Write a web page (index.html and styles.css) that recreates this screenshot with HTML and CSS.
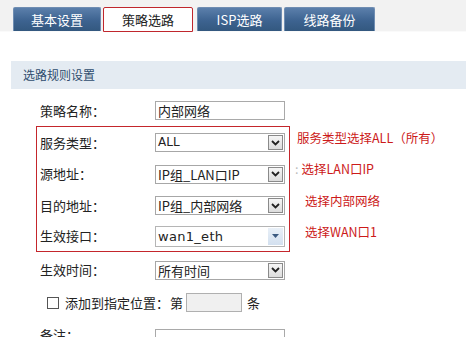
FILE: index.html
```html
<!DOCTYPE html>
<html lang="zh">
<head>
<meta charset="utf-8">
<title>策略选路</title>
<link rel="stylesheet" href="styles.css">
</head>
<body>
<div class="tabbar">
  <div class="tab">基本设置</div>
  <div class="tab active">策略选路</div>
  <div class="tab">ISP选路</div>
  <div class="tab">线路备份</div>
</div>
<div class="section">选路规则设置</div>
<div class="form">
  <div class="row first">
    <div class="label">策略名称：</div>
    <div class="input">内部网络</div>
  </div>
  <div class="boxwrap">
    <div class="redbox">
      <div class="row r1">
        <div class="label">服务类型：</div>
        <div class="select"><span class="val latin">ALL</span><span class="arrow"><svg width="9" height="6" viewBox="0 0 9 6"><path d="M1 1 L4.5 4.5 L8 1" fill="none" stroke="#222" stroke-width="1.8"/></svg></span></div>
      </div>
      <div class="row r2">
        <div class="label">源地址：</div>
        <div class="select"><span class="val">IP组_LAN口IP</span><span class="arrow"><svg width="9" height="6" viewBox="0 0 9 6"><path d="M1 1 L4.5 4.5 L8 1" fill="none" stroke="#222" stroke-width="1.8"/></svg></span></div>
      </div>
      <div class="row r3">
        <div class="label">目的地址：</div>
        <div class="select"><span class="val">IP组_内部网络</span><span class="arrow"><svg width="9" height="6" viewBox="0 0 9 6"><path d="M1 1 L4.5 4.5 L8 1" fill="none" stroke="#222" stroke-width="1.8"/></svg></span></div>
      </div>
      <div class="row r4">
        <div class="label">生效接口：</div>
        <div class="select flat"><span class="val wan">wan1_eth</span><span class="arrow2"><svg width="7" height="4" viewBox="0 0 7 4"><path d="M0 0 H7 L3.5 4 Z" fill="#3b5a80"/></svg></span></div>
      </div>
    </div>
    <div class="notes">
      <div class="note n1">服务类型选择ALL（所有）</div>
      <div class="note n2"><span class="dot">:</span>选择LAN口IP</div>
      <div class="note n3">选择内部网络</div>
      <div class="note n4">选择WAN口1</div>
    </div>
  </div>
  <div class="row after">
    <div class="label">生效时间：</div>
    <div class="select"><span class="val">所有时间</span><span class="arrow"><svg width="9" height="6" viewBox="0 0 9 6"><path d="M1 1 L4.5 4.5 L8 1" fill="none" stroke="#222" stroke-width="1.8"/></svg></span></div>
  </div>
  <div class="row pos">
    <span class="check"></span>
    <span class="poslabel">添加到指定位置：</span>
    <span class="di">第</span>
    <span class="small-input"></span>
    <span class="tiao">条</span>
  </div>
  <div class="row memo">
    <div class="label">备注：</div>
    <div class="input empty"></div>
    <span class="optional">（可选）</span>
  </div>
</div>
</body>
</html>
```
FILE: styles.css
```css
html, body {
  margin: 0;
  padding: 0;
  background: #ffffff;
  overflow: hidden;
}
body {
  width: 466px;
  height: 337px;
  font-family: "Noto Sans CJK SC", "DejaVu Sans", sans-serif;
  font-size: 13px;
  color: #222;
}
.tabbar {
  height: 32px;
  background: #f2f2f2;
  border-bottom: 1px solid #fafafa;
  display: flex;
  align-items: flex-end;
  padding-left: 13px;
  gap: 2px;
  box-sizing: border-box;
}
.tab {
  height: 24px;
  width: 88px;
  box-sizing: border-box;
  background: linear-gradient(#5b7fab, #3d6390 55%, #33587f);
  border: 1px solid #6f8db2;
  border-bottom: none;
  border-radius: 2px 2px 0 0;
  color: #ffffff;
  text-align: center;
  line-height: 23px;
  font-size: 13px;
}
.tab:nth-child(3) { width: 85px; margin-left: 2px; }
.tab:nth-child(4) { width: 91px; }
.tab.active {
  background: #ffffff;
  border: 1px solid #c0272d;
  color: #222;
  height: 25px;
  width: 90px;
  margin-bottom: -1px;
}
.section {
  margin-top: 29px;
  margin-left: 11px;
  height: 28px;
  background: #e4ebf2;
  color: #2f4d6e;
  font-size: 12px;
  line-height: 28px;
  padding-left: 12px;
}
.form {
  padding-left: 36px;
}
.row {
  display: flex;
  align-items: center;
  height: 31px;
}
.row.first {
  margin-top: 6px;
}
.label {
  width: 119px;
  padding-left: 4px;
  box-sizing: border-box;
  flex: none;
  line-height: 16px;
}
.input {
  width: 130px;
  height: 19px;
  box-sizing: border-box;
  border: 1px solid #a9a9a9;
  background: #fff;
  line-height: 17px;
  padding-left: 2px;
  font-size: 13px;
}
.boxwrap {
  display: flex;
  align-items: flex-start;
}
.redbox {
  width: 254px;
  box-sizing: border-box;
  border: 1px solid #c4262c;
  flex: none;
}
.redbox .label { padding-left: 3px; width: 118px; }
.r2 { height: 32px; }
.r4 { height: 30px; }
.select {
  width: 130px;
  height: 19px;
  box-sizing: border-box;
  border: 1px solid #a7a7a7;
  display: flex;
  align-items: center;
  justify-content: space-between;
  background: #fff;
}
.val {
  padding-left: 2px;
  font-size: 13px;
  line-height: 17px;
  white-space: nowrap;
}
.latin {
  font-family: "DejaVu Sans", sans-serif;
  font-size: 12px;
}
.wan {
  font-family: "DejaVu Sans", sans-serif;
  font-size: 13px;
  letter-spacing: 0.3px;
}
.arrow {
  width: 15px;
  height: 15px;
  margin-right: 1px;
  box-sizing: border-box;
  border: 1px solid #8a8a8a;
  background: linear-gradient(#f6f6f6, #dcdcdc);
  display: flex;
  align-items: center;
  justify-content: center;
}
.select.flat {
  border-color: #b5b5b5;
  height: 21px;
}
.arrow2 {
  width: 15px;
  height: 17px;
  margin-right: 1px;
  background: linear-gradient(#e9f0f8, #d3e0ef);
  display: flex;
  align-items: center;
  justify-content: center;
}
.notes {
  margin-top: -4px;
  color: #cc1a1a;
  font-size: 12.5px;
}
.note {
  height: 31px;
  line-height: 31px;
  white-space: nowrap;
}
.n1 { padding-left: 7px; }
.n2 { padding-left: 5px; height: 32px; line-height: 32px; }
.dot { color: #bbb; margin-right: 3px; }
.n3 { padding-left: 15px; }
.n4 { padding-left: 15px; }
.row.after { height: 34px; margin-top: 1px; }
.row.pos { height: 31px; }
.check {
  width: 12px;
  height: 12px;
  box-sizing: border-box;
  border: 1px solid #555;
  background: #fff;
  margin-left: 11px;
}
.poslabel { margin-left: 6px; }
.di { margin-left: 1px; }
.small-input {
  width: 56px;
  height: 19px;
  box-sizing: border-box;
  border: 1px solid #b0b0b0;
  background: #f0f0f0;
  margin-left: 3px;
}
.tiao { margin-left: 5px; }
.row.memo { height: 34px; }
.input.empty { height: 22px; margin-top: 10px; }
.optional { margin-left: 6px; margin-top: 14px; }
```
